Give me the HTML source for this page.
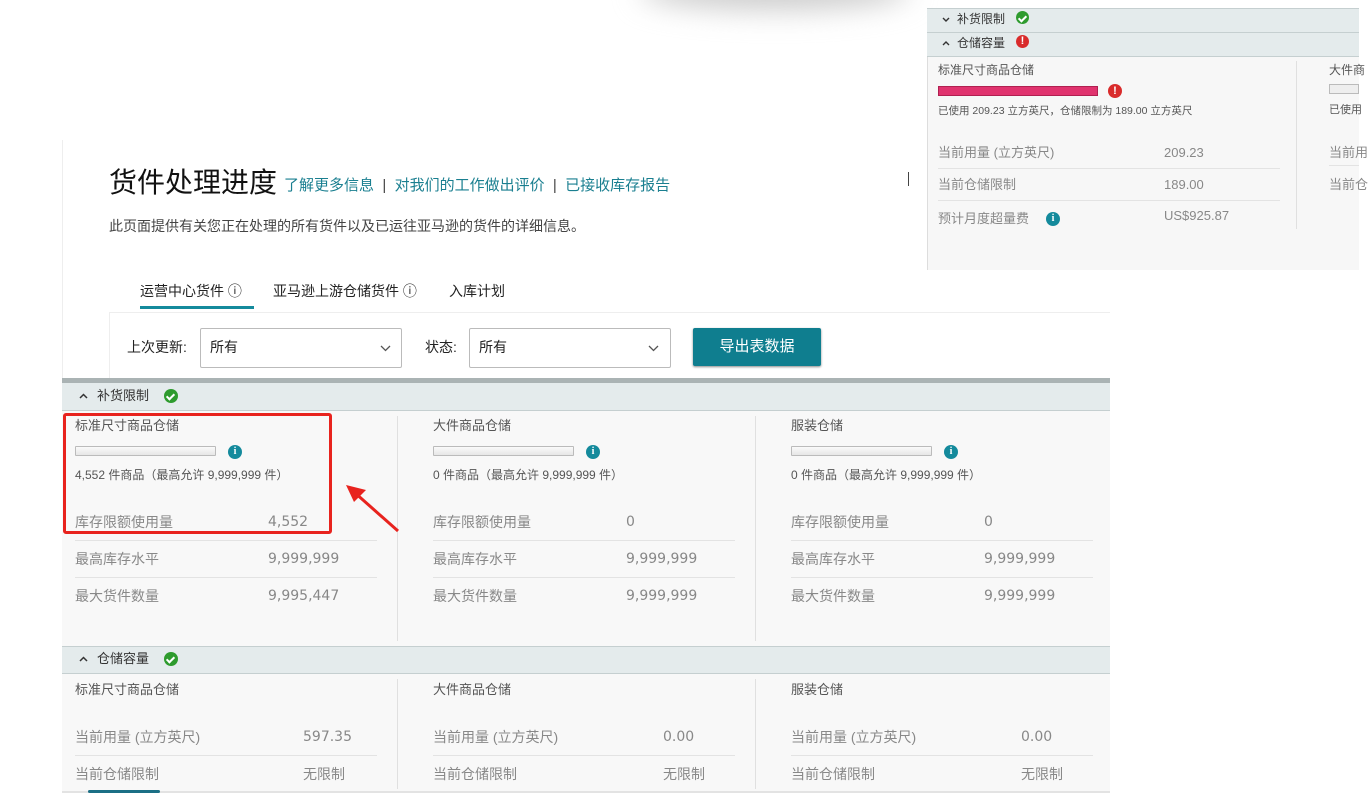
<!DOCTYPE html>
<html><head><meta charset="utf-8"><style>
*{margin:0;padding:0;box-sizing:border-box}
body{width:1369px;height:805px;position:relative;overflow:hidden;background:#fff;font-family:"Liberation Sans","Noto Sans CJK SC",sans-serif;color:#333}
.a{position:absolute;white-space:nowrap;line-height:20px}
.lbl{font-size:14px;color:#888}
.val{font-size:15px;color:#888;font-family:"DejaVu Sans","Noto Sans CJK SC",sans-serif;font-size:14px}
.hd{font-size:13px;color:#555}
.sm{font-size:12px;color:#555}
.line{position:absolute;height:1px;background:#e3e3e3}
.bar{position:absolute;width:141px;height:10px;border:1px solid #bbb;background:linear-gradient(#fafafa,#e6e6e6);border-radius:1px}
.info{position:absolute;width:14px;height:14px;border-radius:50%;background:#148a9c;color:#fff;font:bold 10px/14px "Liberation Serif",serif;text-align:center}
.ok{position:absolute;width:14px;height:14px;border-radius:50%;background:#2e9b2e}
.ok:after{content:"";position:absolute;left:4px;top:3px;width:3px;height:6px;border:solid #fff;border-width:0 2px 2px 0;transform:rotate(45deg)}
.err{position:absolute;width:14px;height:14px;border-radius:50%;background:#d92b2b;color:#fff;font:bold 11px/14px "Liberation Sans",sans-serif;text-align:center}
.sec{position:absolute;background:#e4ebec;border-top:1px solid #c5cfd0;border-bottom:1px solid #c5cfd0}
.vd{position:absolute;width:1px;background:#e0e0e0}
svg.c{position:absolute}
</style></head><body>
<div class="a" style="left:640px;top:-30px;width:270px;height:40px;border-radius:50%;background:#ccc;filter:blur(14px)"></div>

<div class="a" style="left:62px;top:140px;width:1048px;height:240px;background:#fff;border-left:1px solid #eee"></div>
<div class="a" style="left:109px;top:166px;font-size:28px;line-height:34px;color:#111">货件处理进度</div>
<div class="a" style="left:284px;top:176px;font-size:15px;color:#1a7f90">了解更多信息 <span style="color:#444">&nbsp;|&nbsp;</span> 对我们的工作做出评价 <span style="color:#444">&nbsp;|&nbsp;</span> 已接收库存报告</div>
<div class="a" style="left:908px;top:172px;width:1px;height:14px;background:#444"></div>
<div class="a" style="left:109px;top:216px;font-size:14px;color:#444">此页面提供有关您正在处理的所有货件以及已运往亚马逊的货件的详细信息。</div>
<div class="a" style="left:140px;top:281px;font-size:14px;color:#222">运营中心货件 ⓘ</div>
<div class="a" style="left:140px;top:306px;width:114px;height:3px;background:#148a9c"></div>
<div class="a" style="left:273px;top:281px;font-size:14px;color:#222">亚马逊上游仓储货件 ⓘ</div>
<div class="a" style="left:449px;top:281px;font-size:14px;color:#222">入库计划</div>
<div class="a" style="left:109px;top:312px;width:1001px;height:66px;border-top:1px solid #eee;border-left:1px solid #eee"></div>
<div class="a" style="left:127px;top:337px;font-size:14px;color:#222">上次更新:</div>
<div class="a" style="left:200px;top:328px;width:202px;height:40px;border:1px solid #bbb;border-radius:2px"></div>
<div class="a" style="left:210px;top:337px;font-size:14px;color:#222">所有</div>
<svg class="c" style="left:380px;top:345px" width="11" height="7"><path d="M1 1 L5.5 5.5 L10 1" fill="none" stroke="#555" stroke-width="1.3"/></svg>
<div class="a" style="left:425px;top:337px;font-size:14px;color:#222">状态:</div>
<div class="a" style="left:469px;top:328px;width:202px;height:40px;border:1px solid #bbb;border-radius:2px"></div>
<div class="a" style="left:479px;top:337px;font-size:14px;color:#222">所有</div>
<svg class="c" style="left:648px;top:345px" width="11" height="7"><path d="M1 1 L5.5 5.5 L10 1" fill="none" stroke="#555" stroke-width="1.3"/></svg>
<div class="a" style="left:693px;top:328px;width:128px;height:38px;background:#0f7e8f;border-radius:2px;box-shadow:0 1px 2px #888;color:#fff;font-size:15px;line-height:38px;text-align:center">导出表数据</div>

<div class="a" style="left:62px;top:378px;width:1048px;height:5px;background:#aab3b4"></div>
<div class="a" style="left:62px;top:383px;width:1048px;height:412px;background:#f8f8f8"></div>
<div class="sec" style="left:62px;top:383px;width:1048px;height:28px;border-top:0"></div>
<svg class="c" style="left:79px;top:393px" width="9" height="6"><path d="M1 5 L4.5 1.5 L8 5" fill="none" stroke="#333" stroke-width="1.5"/></svg>
<div class="a" style="left:97px;top:386px;font-size:13px;color:#333">补货限制</div>
<div class="ok" style="left:164px;top:389px"></div>

<div class="vd" style="left:397px;top:416px;height:225px"></div>
<div class="vd" style="left:755px;top:416px;height:225px"></div>

<div class="a hd" style="left:75px;top:416px">标准尺寸商品仓储</div>
<div class="bar" style="left:75px;top:446px"></div><div class="info" style="left:228px;top:445px">i</div>
<div class="a sm" style="left:75px;top:465px">4,552 件商品（最高允许 9,999,999 件）</div>
<div class="a lbl" style="left:75px;top:512px">库存限额使用量</div><div class="a val" style="left:268px;top:512px">4,552</div>
<div class="line" style="left:75px;top:540px;width:302px"></div>
<div class="a lbl" style="left:75px;top:549px">最高库存水平</div><div class="a val" style="left:268px;top:549px">9,999,999</div>
<div class="line" style="left:75px;top:577px;width:302px"></div>
<div class="a lbl" style="left:75px;top:586px">最大货件数量</div><div class="a val" style="left:268px;top:586px">9,995,447</div>

<div class="a hd" style="left:433px;top:416px">大件商品仓储</div>
<div class="bar" style="left:433px;top:446px"></div><div class="info" style="left:586px;top:445px">i</div>
<div class="a sm" style="left:433px;top:465px">0 件商品（最高允许 9,999,999 件）</div>
<div class="a lbl" style="left:433px;top:512px">库存限额使用量</div><div class="a val" style="left:626px;top:512px">0</div>
<div class="line" style="left:433px;top:540px;width:302px"></div>
<div class="a lbl" style="left:433px;top:549px">最高库存水平</div><div class="a val" style="left:626px;top:549px">9,999,999</div>
<div class="line" style="left:433px;top:577px;width:302px"></div>
<div class="a lbl" style="left:433px;top:586px">最大货件数量</div><div class="a val" style="left:626px;top:586px">9,999,999</div>

<div class="a hd" style="left:791px;top:416px">服装仓储</div>
<div class="bar" style="left:791px;top:446px"></div><div class="info" style="left:944px;top:445px">i</div>
<div class="a sm" style="left:791px;top:465px">0 件商品（最高允许 9,999,999 件）</div>
<div class="a lbl" style="left:791px;top:512px">库存限额使用量</div><div class="a val" style="left:984px;top:512px">0</div>
<div class="line" style="left:791px;top:540px;width:302px"></div>
<div class="a lbl" style="left:791px;top:549px">最高库存水平</div><div class="a val" style="left:984px;top:549px">9,999,999</div>
<div class="line" style="left:791px;top:577px;width:302px"></div>
<div class="a lbl" style="left:791px;top:586px">最大货件数量</div><div class="a val" style="left:984px;top:586px">9,999,999</div>

<div class="a" style="left:63px;top:413px;width:269px;height:121px;border:3px solid #e8231e;border-radius:3px"></div>
<svg class="a" style="left:340px;top:480px" width="62" height="55"><line x1="58" y1="51" x2="14" y2="12" stroke="#e8231e" stroke-width="3"/><polygon points="6,5 26,10 14,22" fill="#e8231e"/></svg>

<div class="sec" style="left:62px;top:646px;width:1048px;height:28px"></div>
<svg class="c" style="left:79px;top:656px" width="9" height="6"><path d="M1 5 L4.5 1.5 L8 5" fill="none" stroke="#333" stroke-width="1.5"/></svg>
<div class="a" style="left:97px;top:649px;font-size:13px;color:#333">仓储容量</div>
<div class="ok" style="left:164px;top:652px"></div>
<div class="vd" style="left:397px;top:679px;height:110px"></div>
<div class="vd" style="left:755px;top:679px;height:110px"></div>
<div class="a hd" style="left:75px;top:680px">标准尺寸商品仓储</div>
<div class="a hd" style="left:433px;top:680px">大件商品仓储</div>
<div class="a hd" style="left:791px;top:680px">服装仓储</div>
<div class="a lbl" style="left:75px;top:727px">当前用量 (立方英尺)</div><div class="a val" style="left:303px;top:727px">597.35</div>
<div class="a lbl" style="left:433px;top:727px">当前用量 (立方英尺)</div><div class="a val" style="left:663px;top:727px">0.00</div>
<div class="a lbl" style="left:791px;top:727px">当前用量 (立方英尺)</div><div class="a val" style="left:1021px;top:727px">0.00</div>
<div class="line" style="left:75px;top:755px;width:302px"></div>
<div class="line" style="left:433px;top:755px;width:302px"></div>
<div class="line" style="left:791px;top:755px;width:302px"></div>
<div class="a lbl" style="left:75px;top:764px">当前仓储限制</div><div class="a lbl" style="left:303px;top:764px">无限制</div>
<div class="a lbl" style="left:433px;top:764px">当前仓储限制</div><div class="a lbl" style="left:663px;top:764px">无限制</div>
<div class="a lbl" style="left:791px;top:764px">当前仓储限制</div><div class="a lbl" style="left:1021px;top:764px">无限制</div>
<div class="a" style="left:62px;top:791px;width:1048px;height:14px;background:#fff;border-top:2px solid #e3e3e3"></div>
<div class="a" style="left:88px;top:790px;width:72px;height:3px;background:#1b6f85;border-radius:2px"></div>

<div class="a" style="left:927px;top:8px;width:432px;height:262px;background:#f7f7f7;border-left:1px solid #ddd"></div>
<div class="sec" style="left:927px;top:8px;width:432px;height:25px"></div>
<svg class="c" style="left:942px;top:17px" width="8" height="5"><path d="M1 1 L4 4 L7 1" fill="none" stroke="#333" stroke-width="1.4"/></svg>
<div class="a" style="left:957px;top:9px;font-size:12px;color:#333">补货限制</div>
<div class="ok" style="left:1016px;top:11px;width:13px;height:13px"></div>
<div class="sec" style="left:927px;top:32px;width:432px;height:25px"></div>
<svg class="c" style="left:942px;top:41px" width="8" height="5"><path d="M1 4 L4 1 L7 4" fill="none" stroke="#333" stroke-width="1.4"/></svg>
<div class="a" style="left:957px;top:33px;font-size:12px;color:#333">仓储容量</div>
<div class="err" style="left:1016px;top:35px;width:13px;height:13px;line-height:13px">!</div>
<div class="a" style="left:938px;top:60px;font-size:12px;color:#555">标准尺寸商品仓储</div>
<div class="a" style="left:938px;top:86px;width:160px;height:10px;background:#e0336e;border:1px solid #b02050"></div>
<div class="err" style="left:1108px;top:84px">!</div>
<div class="a" style="left:938px;top:101px;font-size:10.5px;color:#555">已使用 209.23 立方英尺，仓储限制为 189.00 立方英尺</div>
<div class="a" style="left:938px;top:143px;font-size:13px;color:#888">当前用量 (立方英尺)</div><div class="a" style="left:1164px;top:143px;font-size:13px;color:#888">209.23</div>
<div class="line" style="left:938px;top:168px;width:342px"></div>
<div class="a" style="left:938px;top:175px;font-size:13px;color:#888">当前仓储限制</div><div class="a" style="left:1164px;top:175px;font-size:13px;color:#888">189.00</div>
<div class="line" style="left:938px;top:200px;width:342px"></div>
<div class="a" style="left:938px;top:209px;font-size:13px;color:#888">预计月度超量费</div><div class="info" style="left:1046px;top:212px">i</div>
<div class="a" style="left:1164px;top:206px;font-size:13px;color:#888">US$925.87</div>
<div class="vd" style="left:1296px;top:61px;height:168px"></div>
<div class="a" style="left:1329px;top:60px;font-size:12px;color:#555">大件商</div>
<div class="a" style="left:1329px;top:84px;width:30px;height:10px;border:1px solid #bbb;background:#eee"></div>
<div class="a" style="left:1329px;top:100px;font-size:11px;color:#555">已使用</div>
<div class="a" style="left:1329px;top:143px;font-size:13px;color:#888">当前用</div>
<div class="line" style="left:1329px;top:165px;width:30px"></div>
<div class="a" style="left:1329px;top:175px;font-size:13px;color:#888">当前仓</div>
</body></html>
